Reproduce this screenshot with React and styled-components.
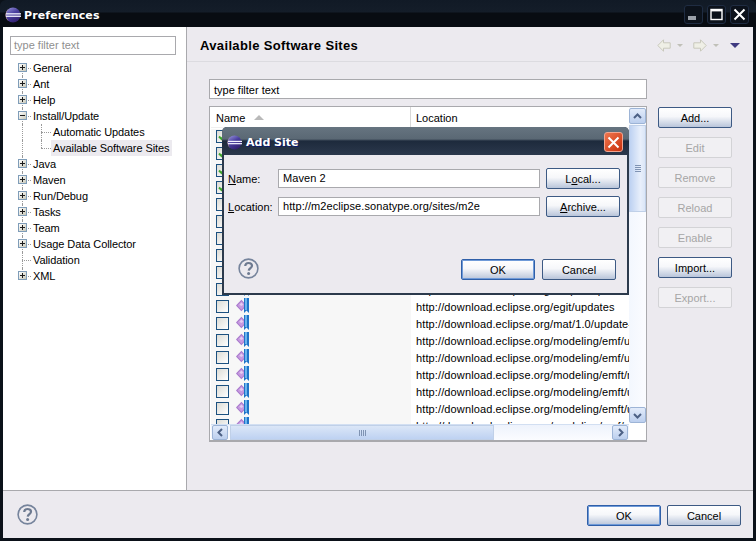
import React from "react";
import styled, { createGlobalStyle } from "styled-components";

const GlobalStyle = createGlobalStyle`
  html, body {
    margin: 0;
    padding: 0;
    background: #0b1119;
  }
  * {
    box-sizing: border-box;
  }
`;

const FONT = `"Liberation Sans", Arial, sans-serif`;
const TITLE_FONT = `"DejaVu Sans", Verdana, sans-serif`;

const treeItems = [
  { label: "General", icon: "plus", first: true },
  { label: "Ant", icon: "plus" },
  { label: "Help", icon: "plus" },
  { label: "Install/Update", icon: "minus" },
  { label: "Automatic Updates", child: true },
  { label: "Available Software Sites", child: true, selected: true, lastChild: true },
  { label: "Java", icon: "plus" },
  { label: "Maven", icon: "plus" },
  { label: "Run/Debug", icon: "plus" },
  { label: "Tasks", icon: "plus" },
  { label: "Team", icon: "plus" },
  { label: "Usage Data Collector", icon: "plus" },
  { label: "Validation" },
  { label: "XML", icon: "plus", last: true }
];

// rows behind the dialog show no location text in the screenshot
const siteRows = [
  { checked: true },
  { checked: true },
  { checked: true },
  { checked: true },
  {},
  {},
  {},
  {},
  {},
  { url: "http://download.eclipse.org/eclipse/updates/3.6" },
  { url: "http://download.eclipse.org/egit/updates" },
  { url: "http://download.eclipse.org/mat/1.0/update-site/" },
  { url: "http://download.eclipse.org/modeling/emf/updates/" },
  { url: "http://download.eclipse.org/modeling/emf/updates/" },
  { url: "http://download.eclipse.org/modeling/emft/mwe/" },
  { url: "http://download.eclipse.org/modeling/emft/updates/" },
  { url: "http://download.eclipse.org/modeling/emft/updates/" },
  { url: "http://download.eclipse.org/modeling/emf/updates/" }
];

const sideButtons = [
  { label: "Add...", active: true },
  { label: "Edit" },
  { label: "Remove" },
  { label: "Reload" },
  { label: "Enable" },
  { label: "Import...", active: true },
  { label: "Export..." }
];

const EclipseIcon = ({ size = 16, id }) => (
  <svg width={size} height={size} viewBox="0 0 16 16">
    <defs>
      <linearGradient id={id} x1="0" y1="0" x2="0.6" y2="1">
        <stop offset="0" stopColor="#a09ce0" />
        <stop offset="0.5" stopColor="#4a40a0" />
        <stop offset="1" stopColor="#322070" />
      </linearGradient>
    </defs>
    <circle cx="8" cy="8" r="7.5" fill={`url(#${id})`} />
    <path d="M3.5 2 A7.5 7.5 0 0 0 3.5 14 A8.6 8.6 0 0 1 3.5 2Z" fill="#d8a890" />
    <rect x="1" y="6.2" width="15" height="1.3" fill="#f4f4ff" />
    <rect x="1" y="8.6" width="15" height="1.3" fill="#f4f4ff" />
  </svg>
);

const HelpIcon = () => (
  <HelpGlyph width="21" height="21" viewBox="0 0 21 21">
    <circle cx="10.5" cy="10.5" r="9.4" fill="#eceaef" stroke="#76849c" strokeWidth="1.6" />
    <path
      d="M7.2 8 C7.4 5.9 9 5 10.5 5 C12.5 5 14 6.1 14 7.8 C14 10 11 10.2 10.7 12.6"
      fill="none"
      stroke="#6d7a90"
      strokeWidth="2.2"
    />
    <circle cx="10.6" cy="15.4" r="1.5" fill="#6d7a90" />
  </HelpGlyph>
);

const ArrowIcon = ({ flip }) => (
  <svg width="14" height="13" viewBox="0 0 14 13" style={flip ? { transform: "scaleX(-1)" } : undefined}>
    <path
      d="M0.8 6.5 L6.5 0.8 L6.5 3.8 L13.2 3.8 L13.2 9.2 L6.5 9.2 L6.5 12.2Z"
      fill="#efefe6"
      stroke="#c8c8bc"
      strokeWidth="1"
    />
  </svg>
);

const SiteIcon = () => (
  <SiteGlyph width="13" height="15" viewBox="0 0 13 15">
    <path d="M0 7.5 L5.4 1.8 L10.8 7.5 L5.4 13.2Z" fill="#a878cc" />
    <path d="M1.4 7.5 L5.4 3.2 L9.4 7.5 L5.4 11.8Z" fill="#c79ae0" />
    <path d="M3.4 6.8 L5.4 4.6 L7.4 6.8 L5.4 8Z" fill="#e6ccf2" />
    <path d="M8 0 H13 V15 L10.5 12.5 L8 15Z" fill="#1f74c8" />
    <path d="M9 0 H11 V12 H9Z" fill="#6cb4ec" />
  </SiteGlyph>
);

const Chevron = ({ dir }) => {
  const paths = {
    up: "M1 6 L4.5 2.5 L8 6",
    down: "M1 3 L4.5 6.5 L8 3",
    left: "M6 1 L2.5 4.5 L6 8",
    right: "M3 1 L6.5 4.5 L3 8"
  };
  return (
    <svg width="9" height="9" viewBox="0 0 9 9">
      <path d={paths[dir]} fill="none" stroke="#4d6185" strokeWidth="2" />
    </svg>
  );
};

const App = () => (
  <>
    <GlobalStyle />
    <Window>
      <TitleBar>
        <EclipseIcon id="eclipseMain" />
        <TitleText>Preferences</TitleText>
        <WinButtons>
          <WinButton>
            <svg width="12" height="12" viewBox="0 0 12 12">
              <rect x="0" y="7" width="8" height="4" fill="#9aa0a8" />
            </svg>
          </WinButton>
          <WinButton>
            <svg width="13" height="13" viewBox="0 0 13 13">
              <rect x="1" y="1.5" width="11" height="10" fill="none" stroke="#fff" strokeWidth="1.4" />
              <rect x="1" y="1" width="11" height="2.4" fill="#fff" />
            </svg>
          </WinButton>
          <WinButton>
            <svg width="13" height="13" viewBox="0 0 13 13">
              <path d="M1.5 1.5 L11.5 11.5 M11.5 1.5 L1.5 11.5" stroke="#fff" strokeWidth="2" />
            </svg>
          </WinButton>
        </WinButtons>
      </TitleBar>

      <Body>
        <Main>
          <Sidebar>
            <SideFilter>type filter text</SideFilter>
            <Tree>
              {treeItems.map(item => (
                <TreeRow key={item.label} $child={item.child} $first={item.first} $last={item.last}>
                  {item.child && <ChildGuide $end={item.lastChild} />}
                  {item.icon && (
                    <Expander>
                      <svg width="9" height="9" viewBox="0 0 9 9">
                        <path d="M2 4.5 H7" stroke="#1b1b1b" strokeWidth="1" />
                        {item.icon === "plus" && <path d="M4.5 2 V7" stroke="#1b1b1b" strokeWidth="1" />}
                      </svg>
                    </Expander>
                  )}
                  <TreeLabel $selected={item.selected}>{item.label}</TreeLabel>
                </TreeRow>
              ))}
            </Tree>
          </Sidebar>

          <Content>
            <ContentHeader>
              <ContentTitle>Available Software Sites</ContentTitle>
              <NavIcons>
                <ArrowIcon />
                <SmallCaret />
                <ArrowIcon flip />
                <SmallCaret />
                <MenuCaret />
              </NavIcons>
            </ContentHeader>

            <ContentBody>
              <FilterInput>type filter text</FilterInput>
              <TableArea>
                <Table>
                  <TableMain>
                    <TableHead>
                      <NameHead>
                        Name
                        <SortArrow />
                      </NameHead>
                      <LocationHead>Location</LocationHead>
                    </TableHead>
                    <Rows>
                      {siteRows.map((row, index) => (
                        <Row key={index}>
                          <NameCell>
                            <Check>
                              {row.checked && (
                                <svg width="11" height="11" viewBox="0 0 11 11">
                                  <path d="M2 5.5 L4.5 8 L9 2.5" fill="none" stroke="#3fa52e" strokeWidth="2" />
                                </svg>
                              )}
                            </Check>
                            <SiteIcon />
                          </NameCell>
                          <LocationCell>{row.url}</LocationCell>
                        </Row>
                      ))}
                    </Rows>
                    <HScroll>
                      <ScrollButton $h>
                        <Chevron dir="left" />
                      </ScrollButton>
                      <HThumb>
                        <Grip $h />
                      </HThumb>
                      <ScrollButton $h>
                        <Chevron dir="right" />
                      </ScrollButton>
                    </HScroll>
                  </TableMain>
                  <VScroll>
                    <ScrollButton>
                      <Chevron dir="up" />
                    </ScrollButton>
                    <VThumb>
                      <Grip />
                    </VThumb>
                    <ScrollButton>
                      <Chevron dir="down" />
                    </ScrollButton>
                  </VScroll>
                </Table>
                <SideButtons>
                  {sideButtons.map(b => (
                    <PushButton key={b.label} $disabled={!b.active}>
                      <span>{b.label}</span>
                    </PushButton>
                  ))}
                </SideButtons>
              </TableArea>
            </ContentBody>
          </Content>
        </Main>

        <Footer>
          <HelpIcon />
          <FooterButtons>
            <PushButton $default>
              <span>OK</span>
            </PushButton>
            <PushButton>
              <span>Cancel</span>
            </PushButton>
          </FooterButtons>
        </Footer>
      </Body>

      <Dialog>
        <DialogTitle>
          <EclipseIcon size={15} id="eclipseDialog" />
          <DialogTitleText>Add Site</DialogTitleText>
          <CloseButton>
            <svg width="13" height="13" viewBox="0 0 13 13">
              <path d="M1.5 1.5 L11.5 11.5 M11.5 1.5 L1.5 11.5" stroke="#fff" strokeWidth="2" />
            </svg>
          </CloseButton>
        </DialogTitle>
        <DialogBody>
          <Form>
            <FieldLabel>
              <u>N</u>ame:
            </FieldLabel>
            <FieldInput>Maven 2</FieldInput>
            <PushButton>
              <span>
                L<u>o</u>cal...
              </span>
            </PushButton>
            <FieldLabel>
              <u>L</u>ocation:
            </FieldLabel>
            <FieldInput>http://m2eclipse.sonatype.org/sites/m2e</FieldInput>
            <PushButton>
              <span>
                <u>A</u>rchive...
              </span>
            </PushButton>
          </Form>
          <DialogFooter>
            <HelpIcon />
            <FooterButtons>
              <PushButton $default>
                <span>OK</span>
              </PushButton>
              <PushButton>
                <span>Cancel</span>
              </PushButton>
            </FooterButtons>
          </DialogFooter>
        </DialogBody>
      </Dialog>
    </Window>
  </>
);

export default App;

const HelpGlyph = styled.svg`
  flex: none;
  margin-top: -2px;
`;

const SiteGlyph = styled.svg`
  flex: none;
  margin-top: -2px;
`;

const Window = styled.div`
  position: relative;
  width: 756px;
  height: 541px;
  display: flex;
  flex-direction: column;
  overflow: hidden;
  font: 11px ${FONT};
  color: #000;
  background: #0b1119;
  border-radius: 6px 6px 0 0;
`;

const TitleBar = styled.div`
  flex: 0 0 27px;
  display: flex;
  align-items: center;
  padding: 2px 7px 0 5px;
  gap: 3px;
  background: linear-gradient(#111a26 0, #141d29 12px, #080c12 13px, #080c12 100%);
`;

const TitleText = styled.div`
  margin-top: 2px;
  font: bold 11px ${TITLE_FONT};
  letter-spacing: 0.1px;
  color: #fff;
`;

const WinButtons = styled.div`
  margin-left: auto;
  display: flex;
  gap: 4px;
`;

const WinButton = styled.div`
  width: 19px;
  height: 19px;
  display: flex;
  align-items: center;
  justify-content: center;
  border: 1px solid #1f2c42;
  border-radius: 3px;
  background: #0c121b;
`;

const Body = styled.div`
  flex: 1;
  display: flex;
  flex-direction: column;
  margin: 0 3px 3px;
  background: #eceaef;
  min-height: 0;
`;

const Main = styled.div`
  flex: 0 0 464px;
  display: flex;
  min-height: 0;
  border-bottom: 1px solid #a9a9ad;
`;

const Sidebar = styled.div`
  flex: 0 0 184px;
  background: #fff;
  border-right: 1px solid #a9a9ad;
  padding: 9px 0 0 7px;
`;

const SideFilter = styled.div`
  width: 166px;
  height: 19px;
  border: 1px solid #a9a9ad;
  padding: 2px 3px;
  color: #8f8f8f;
  font-size: 11px;
  line-height: 13px;
`;

const Tree = styled.div`
  margin: 5px 0 0 8px;
`;

const TreeRow = styled.div`
  position: relative;
  height: 16px;
  display: flex;
  align-items: center;
  padding-left: ${p => (p.$child ? "33px" : "13px")};

  &::before {
    content: "";
    position: absolute;
    left: ${p => (p.$child ? "23px" : "4px")};
    top: 8px;
    width: ${p => (p.$child ? "10px" : "9px")};
    border-top: 1px dotted #9a9a9a;
  }

  &::after {
    content: "";
    position: absolute;
    left: 4px;
    top: ${p => (p.$first ? "8px" : "0")};
    height: ${p => (p.$last || p.$first ? "8px" : "16px")};
    border-left: 1px dotted #9a9a9a;
  }
`;

const ChildGuide = styled.div`
  position: absolute;
  left: 23px;
  top: 0;
  height: ${p => (p.$end ? "8px" : "16px")};
  border-left: 1px dotted #9a9a9a;
`;

const Expander = styled.div`
  position: absolute;
  z-index: 1;
  left: 0;
  top: 3px;
  width: 9px;
  height: 9px;
  display: flex;
  background: linear-gradient(135deg, #fff, #c8c8b8);
  border: 1px solid #7f9db9;

  svg {
    margin: -1px;
    flex: none;
  }
`;

const TreeLabel = styled.span`
  padding: 1px 2px;
  line-height: 14px;
  white-space: nowrap;
  letter-spacing: -0.08px;
  background: ${p => (p.$selected ? "#eceaef" : "transparent")};
`;

const Content = styled.div`
  flex: 1;
  display: flex;
  flex-direction: column;
  min-width: 0;
`;

const ContentHeader = styled.div`
  flex: 0 0 35px;
  display: flex;
  align-items: center;
  justify-content: space-between;
  padding: 3px 13px 0 13px;
  border-bottom: 1px solid #dcdbe0;
`;

const ContentTitle = styled.div`
  font: bold 13px ${FONT};
  letter-spacing: 0.35px;
`;

const NavIcons = styled.div`
  display: flex;
  align-items: center;
  gap: 6px;
`;

const SmallCaret = styled.div`
  width: 0;
  height: 0;
  margin-right: 4px;
  border-left: 3px solid transparent;
  border-right: 3px solid transparent;
  border-top: 3px solid #c0c0b8;
`;

const MenuCaret = styled.div`
  width: 0;
  height: 0;
  margin-left: 1px;
  border-left: 5px solid transparent;
  border-right: 5px solid transparent;
  border-top: 5px solid #3f3a80;
`;

const ContentBody = styled.div`
  flex: 1;
  display: flex;
  flex-direction: column;
  padding: 17px 21px 0 22px;
  min-height: 0;
`;

const FilterInput = styled.div`
  width: 438px;
  height: 20px;
  flex: none;
  border: 1px solid #a9a9ad;
  background: #fff;
  padding: 4px 4px 0;
  line-height: 13px;
`;

const TableArea = styled.div`
  display: flex;
  margin-top: 7px;
  align-items: flex-start;
`;

const Table = styled.div`
  flex: 0 0 438px;
  height: 336px;
  display: flex;
  border: 1px solid #a9a9ad;
  border-bottom-width: 2px;
  background: #fff;
  padding: 0 0 0 1px;
`;

const TableMain = styled.div`
  width: 418px;
  display: flex;
  flex-direction: column;
  min-height: 0;
`;

const TableHead = styled.div`
  flex: 0 0 21px;
  display: flex;
  background: #fff;
`;

const NameHead = styled.div`
  flex: 0 0 200px;
  display: flex;
  align-items: center;
  gap: 9px;
  padding: 1px 0 0 5px;
  border-right: 1px solid #d8d8d8;
  border-bottom: 1px solid #f0f0f0;
`;

const LocationHead = styled.div`
  flex: 1;
  display: flex;
  align-items: center;
  padding: 1px 0 0 5px;
  border-bottom: 1px solid #f0f0f0;
`;

const SortArrow = styled.span`
  width: 0;
  height: 0;
  border-left: 5px solid transparent;
  border-right: 5px solid transparent;
  border-bottom: 5px solid #b9b9b9;
`;

const Rows = styled.div`
  flex: 1;
  min-height: 0;
  overflow: hidden;
  padding-top: 1px;
`;

const Row = styled.div`
  height: 17px;
  display: flex;
`;

const NameCell = styled.div`
  flex: 0 0 200px;
  display: flex;
  align-items: flex-start;
  gap: 7px;
  padding: 1px 0 0 5px;
  background: #f7f7f7;
`;

const Check = styled.div`
  width: 13px;
  height: 13px;
  flex: none;
  display: flex;
  align-items: center;
  justify-content: center;
  border: 1px solid #1c5180;
  background: linear-gradient(135deg, #dcdcd6, #fff);
`;

const LocationCell = styled.div`
  flex: 1;
  min-width: 0;
  padding-left: 5px;
  line-height: 17px;
  letter-spacing: 0.12px;
  white-space: nowrap;
  overflow: hidden;
`;

const HScroll = styled.div`
  flex: 0 0 16px;
  display: flex;
  padding-right: 1px;
  background: linear-gradient(#eef3fc, #fbfcff);
  border-top: 1px solid #d2dff2;
`;

const VScroll = styled.div`
  flex: 0 0 17px;
  height: 316px;
  display: flex;
  flex-direction: column;
  background: linear-gradient(90deg, #f3f7fe, #fbfcff);
`;

const ScrollButton = styled.div`
  flex: 0 0 16px;
  ${p => (p.$h ? "margin-left: 1px;" : "margin-top: 1px;")}
  display: flex;
  align-items: center;
  justify-content: center;
  border: 1px solid #9db4d6;
  border-radius: 2px;
  background: linear-gradient(#e2ebfa, #bccfee);
`;

const VThumb = styled.div`
  flex: 0 0 87px;
  margin: 1px 0 auto;
  display: flex;
  align-items: center;
  justify-content: center;
  border: 1px solid #c0d0e8;
  background: linear-gradient(90deg, #bed2f2, #e8effb 70%, #dbe6f7);
`;

const HThumb = styled.div`
  flex: 0 0 264px;
  margin: 0 auto 0 2px;
  display: flex;
  align-items: center;
  justify-content: center;
  border: 1px solid #c0d0e8;
  background: linear-gradient(#dbe6f7, #bed2f2);
`;

const Grip = styled.div`
  ${p =>
    p.$h
      ? "width: 7px; height: 6px; background: repeating-linear-gradient(90deg, #7f93b3 0 1px, transparent 1px 2px);"
      : "width: 6px; height: 7px; background: repeating-linear-gradient(#7f93b3 0 1px, transparent 1px 2px);"}
`;

const SideButtons = styled.div`
  flex: none;
  display: flex;
  flex-direction: column;
  gap: 9px;
  margin-left: 11px;
  padding-top: 1px;
`;

const PushButton = styled.div`
  width: 74px;
  height: 21px;
  flex: none;
  display: flex;
  align-items: center;
  justify-content: center;
  white-space: pre;
  font-size: 11px;
  border-radius: 2px;
  border: 1px solid ${p => (p.$disabled ? "#d3d3d6" : p.$default ? "#2f5fa8" : "#3d5a84")};
  color: ${p => (p.$disabled ? "#a6a6a6" : "#000")};
  background: ${p =>
    p.$disabled ? "#f1f0f3" : "linear-gradient(#fff 0, #f6f7fa 45%, #b9c5da 100%)"};
  box-shadow: ${p => (p.$default ? "inset 0 0 0 1px #6f9ad8" : "none")};
`;

const Footer = styled.div`
  flex: 1;
  display: flex;
  align-items: center;
  justify-content: space-between;
  padding: 2px 12px 0 14px;
`;

const FooterButtons = styled.div`
  display: flex;
  gap: 6px;
`;

const Dialog = styled.div`
  position: absolute;
  left: 222px;
  top: 127px;
  width: 407px;
  height: 168px;
  display: flex;
  flex-direction: column;
  background: #2c3a4c;
  padding: 0 2px 2px;
  border-radius: 5px 5px 0 0;
`;

const DialogTitle = styled.div`
  flex: 0 0 28px;
  display: flex;
  align-items: center;
  gap: 4px;
  padding: 2px 6px 0 5px;
  margin: 0 -2px;
  border-radius: 5px 5px 0 0;
  background: linear-gradient(#667480 0, #5a6874 12px, #1d2a3c 14px, #2b384c 100%);
`;

const DialogTitleText = styled.div`
  font: bold 11px ${TITLE_FONT};
  color: #fff;
  text-shadow: 1px 1px 0 #0a1a70;
`;

const CloseButton = styled.div`
  margin-left: auto;
  width: 19px;
  height: 20px;
  display: flex;
  align-items: center;
  justify-content: center;
  border: 1px solid #f3a590;
  border-radius: 3px;
  background: linear-gradient(135deg, #f0764e, #c8300c);
`;

const DialogBody = styled.div`
  flex: 1;
  display: flex;
  flex-direction: column;
  background: #eceaef;
  padding: 13px 0 13px 4px;
`;

const Form = styled.div`
  display: grid;
  grid-template-columns: 44px 262px 74px;
  column-gap: 6px;
  row-gap: 7px;
  align-items: center;
`;

const FieldLabel = styled.div`
  white-space: pre;
`;

const FieldInput = styled.div`
  height: 19px;
  border: 1px solid #a9a9ad;
  background: #fff;
  padding: 2px 4px;
  line-height: 13px;
  letter-spacing: 0.08px;
  white-space: nowrap;
`;

const DialogFooter = styled.div`
  margin-top: auto;
  display: flex;
  align-items: center;
  justify-content: space-between;
  padding: 0 11px 0 10px;

  ${FooterButtons} {
    gap: 7px;
  }
`;
